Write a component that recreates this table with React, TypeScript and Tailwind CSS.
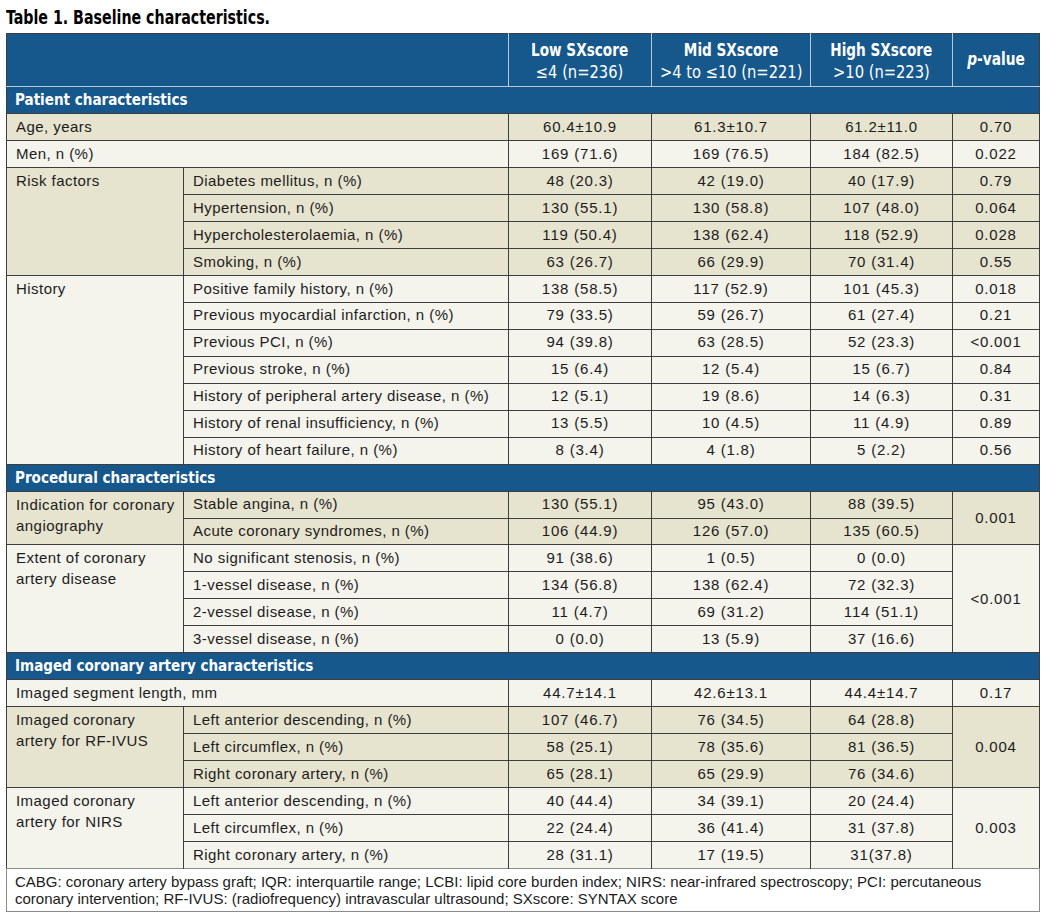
import React from "react";

type Row = { label: string; v: [string, string, string]; p?: string };
type Group = { title?: string; rows: Row[]; p?: string; tan: boolean };
type Section = { name: string; groups: Group[] };

const sections: Section[] = [
  {
    name: "Patient characteristics",
    groups: [
      { tan: true, rows: [{ label: "Age, years", v: ["60.4±10.9", "61.3±10.7", "61.2±11.0"], p: "0.70" }] },
      { tan: false, rows: [{ label: "Men, n (%)", v: ["169 (71.6)", "169 (76.5)", "184 (82.5)"], p: "0.022" }] },
      {
        tan: true,
        title: "Risk factors",
        rows: [
          { label: "Diabetes mellitus, n (%)", v: ["48 (20.3)", "42 (19.0)", "40 (17.9)"], p: "0.79" },
          { label: "Hypertension, n (%)", v: ["130 (55.1)", "130 (58.8)", "107 (48.0)"], p: "0.064" },
          { label: "Hypercholesterolaemia, n (%)", v: ["119 (50.4)", "138 (62.4)", "118 (52.9)"], p: "0.028" },
          { label: "Smoking, n (%)", v: ["63 (26.7)", "66 (29.9)", "70 (31.4)"], p: "0.55" },
        ],
      },
      {
        tan: false,
        title: "History",
        rows: [
          { label: "Positive family history, n (%)", v: ["138 (58.5)", "117 (52.9)", "101 (45.3)"], p: "0.018" },
          { label: "Previous myocardial infarction, n (%)", v: ["79 (33.5)", "59 (26.7)", "61 (27.4)"], p: "0.21" },
          { label: "Previous PCI, n (%)", v: ["94 (39.8)", "63 (28.5)", "52 (23.3)"], p: "<0.001" },
          { label: "Previous stroke, n (%)", v: ["15 (6.4)", "12 (5.4)", "15 (6.7)"], p: "0.84" },
          { label: "History of peripheral artery disease, n (%)", v: ["12 (5.1)", "19 (8.6)", "14 (6.3)"], p: "0.31" },
          { label: "History of renal insufficiency, n (%)", v: ["13 (5.5)", "10 (4.5)", "11 (4.9)"], p: "0.89" },
          { label: "History of heart failure, n (%)", v: ["8 (3.4)", "4 (1.8)", "5 (2.2)"], p: "0.56" },
        ],
      },
    ],
  },
  {
    name: "Procedural characteristics",
    groups: [
      {
        tan: true,
        title: "Indication for coronary|angiography",
        p: "0.001",
        rows: [
          { label: "Stable angina, n (%)", v: ["130 (55.1)", "95 (43.0)", "88 (39.5)"] },
          { label: "Acute coronary syndromes, n (%)", v: ["106 (44.9)", "126 (57.0)", "135 (60.5)"] },
        ],
      },
      {
        tan: false,
        title: "Extent of coronary|artery disease",
        p: "<0.001",
        rows: [
          { label: "No significant stenosis, n (%)", v: ["91 (38.6)", "1 (0.5)", "0 (0.0)"] },
          { label: "1-vessel disease, n (%)", v: ["134 (56.8)", "138 (62.4)", "72 (32.3)"] },
          { label: "2-vessel disease, n (%)", v: ["11 (4.7)", "69 (31.2)", "114 (51.1)"] },
          { label: "3-vessel disease, n (%)", v: ["0 (0.0)", "13 (5.9)", "37 (16.6)"] },
        ],
      },
    ],
  },
  {
    name: "Imaged coronary artery characteristics",
    groups: [
      { tan: false, rows: [{ label: "Imaged segment length, mm", v: ["44.7±14.1", "42.6±13.1", "44.4±14.7"], p: "0.17" }] },
      {
        tan: true,
        title: "Imaged coronary|artery for RF-IVUS",
        p: "0.004",
        rows: [
          { label: "Left anterior descending, n (%)", v: ["107 (46.7)", "76 (34.5)", "64 (28.8)"] },
          { label: "Left circumflex, n (%)", v: ["58 (25.1)", "78 (35.6)", "81 (36.5)"] },
          { label: "Right coronary artery, n (%)", v: ["65 (28.1)", "65 (29.9)", "76 (34.6)"] },
        ],
      },
      {
        tan: false,
        title: "Imaged coronary|artery for NIRS",
        p: "0.003",
        rows: [
          { label: "Left anterior descending, n (%)", v: ["40 (44.4)", "34 (39.1)", "20 (24.4)"] },
          { label: "Left circumflex, n (%)", v: ["22 (24.4)", "36 (41.4)", "31 (37.8)"] },
          { label: "Right coronary artery, n (%)", v: ["28 (31.1)", "17 (19.5)", "31(37.8)"] },
        ],
      },
    ],
  },
];

// condensed headline face; squeezed a bit more to look like the journal's gothic
const narrow = "font-['DejaVu_Sans_Condensed','Liberation_Sans',sans-serif]";
const line = "border-[#3d3d3d]";

function GroupRows({ g }: { g: Group }) {
  const bg = g.tan ? "bg-[#e6e3cf]" : "bg-[#f4f3ec]";
  const cell = `border-t border-l ${line} text-center align-middle p-0 tracking-[0.8px]`;
  return (
    <>
      {g.rows.map((r, i) => (
        <tr key={r.label} className={`h-[26.97px] ${bg}`}>
          {!g.title && (
            <td colSpan={2} className={`border-t ${line} pl-[9px] align-middle p-0`}>
              {r.label}
            </td>
          )}
          {g.title && i === 0 && (
            <td rowSpan={g.rows.length} className={`border-t ${line} align-top pl-[9px] pt-[2px] leading-[21px]`}>
              {g.title.split("|").map((t, k) => (
                <div key={k} className="whitespace-nowrap">{t}</div>
              ))}
            </td>
          )}
          {g.title && (
            <td className={`border-t border-l ${line} pl-[9px] align-middle p-0 whitespace-nowrap`}>{r.label}</td>
          )}
          {r.v.map((x, k) => (
            <td key={k} className={cell}>{x}</td>
          ))}
          {r.p !== undefined && <td className={cell}>{r.p}</td>}
          {g.p !== undefined && i === 0 && (
            <td rowSpan={g.rows.length} className={cell}>{g.p}</td>
          )}
        </tr>
      ))}
    </>
  );
}

export default function App() {
  const heads: [string, string][] = [
    ["Low SXscore", "≤4 (n=236)"],
    ["Mid SXscore", ">4 to ≤10 (n=221)"],
    ["High SXscore", ">10 (n=223)"],
  ];
  return (
    <div className="bg-white w-[1045px] h-[915px] pl-[6px] pt-[5px] text-[#1c1c1c] font-['Liberation_Sans',Arial,sans-serif]">
      <div className={`${narrow} font-bold text-[20px] leading-[24px] text-black whitespace-nowrap`}>
        <span className="inline-block origin-left scale-x-[0.79]">Table 1. Baseline characteristics.</span>
      </div>
      <table className={`mt-[4px] table-fixed border-collapse w-[1033px] border ${line} text-[15px] tracking-[0.45px]`}>
        <colgroup>
          <col className="w-[177px]" />
          <col className="w-[325px]" />
          <col className="w-[143px]" />
          <col className="w-[159px]" />
          <col className="w-[142px]" />
          <col className="w-[87px]" />
        </colgroup>
        <tbody>
          <tr className={`h-[53px] bg-[#16588c] text-white ${narrow} text-[17px] tracking-normal`}>
            <td colSpan={2} className="border-b border-[#b9c9d8]" />
            {heads.map(([a, b]) => (
              <td key={a} className="border-l border-b border-[#b9c9d8] text-center leading-[22px] pt-[1px] whitespace-nowrap">
                <div className="font-bold">
                  <span className="inline-block scale-x-[0.89]">{a}</span>
                </div>
                <div>
                  <span className="inline-block scale-x-[0.96]">{b}</span>
                </div>
              </td>
            ))}
            <td className="border-l border-b border-[#b9c9d8] text-center font-bold">
              <span className="inline-block scale-x-[0.9]">
                <i>p</i>-value
              </span>
            </td>
          </tr>
          {sections.map((s) => (
            <React.Fragment key={s.name}>
              <tr className="h-[26.97px] bg-[#16588c]">
                <td
                  colSpan={6}
                  className={`border-t ${s.name.startsWith("Patient") ? "border-[#b9c9d8]" : line} pl-[8px] ${narrow} font-bold text-[16px] text-white tracking-normal align-middle whitespace-nowrap`}
                >
                  <span className="inline-block origin-left scale-x-[0.94]">{s.name}</span>
                </td>
              </tr>
              {s.groups.map((g, i) => (
                <GroupRows key={i} g={g} />
              ))}
            </React.Fragment>
          ))}
          <tr className="bg-white">
            <td colSpan={6} className="border border-[#8a8a8a] px-[8px] pt-[4px] pb-[4px] text-[15px] leading-[17px] tracking-normal">
              CABG: coronary artery bypass graft; IQR: interquartile range; LCBI: lipid core burden index; NIRS: near-infrared spectroscopy; PCI: percutaneous coronary intervention; RF-IVUS: (radiofrequency) intravascular ultrasound; SXscore: SYNTAX score
            </td>
          </tr>
        </tbody>
      </table>
    </div>
  );
}
